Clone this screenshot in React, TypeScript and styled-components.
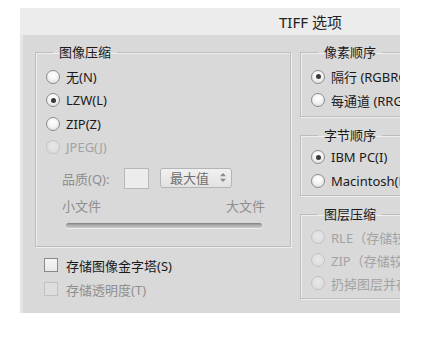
import React from "react";
import styled, { createGlobalStyle } from "styled-components";

const Global = createGlobalStyle`
  html, body { margin: 0; padding: 0; background: #ffffff; }
  body {
    font-family: "Noto Sans", "Noto Sans CJK SC", sans-serif;
    font-size: 13px;
    color: #1a1a1a;
  }
`;

const Dialog = styled.div`
  margin: 8px 0 0 20px;
  width: 380px;
  height: 305px;
  overflow: hidden;
  display: flex;
  flex-direction: column;
  background: #d9d9d9;
`;

const TitleBar = styled.div`
  height: 27px;
  flex: none;
  background: #ececec;
  display: flex;
  align-items: center;
  padding-left: 259px;
  font-size: 15px;
  color: #222;
  white-space: nowrap;
`;

const Body = styled.div`
  flex: 1;
  display: flex;
  gap: 9px;
  padding: 9px 0 0 12px;
  border-left: 3px solid #e6e6e6;
  background: #d9d9d9;
`;

const Column = styled.div<{ $w: number }>`
  width: ${(p) => p.$w}px;
  flex: none;
  display: flex;
  flex-direction: column;
`;

const RightColumn = styled(Column)`
  gap: 10px;
`;

const Group = styled.fieldset<{ $pt: number; $pb: number }>`
  margin: 0;
  padding: ${(p) => p.$pt}px 0 ${(p) => p.$pb}px 0;
  border: 1px solid #bdbdbd;
  box-shadow: 1px 1px 0 #eeeeee, inset 1px 1px 0 #eeeeee;
  min-width: 0;
  display: flex;
  flex-direction: column;
`;

const Legend = styled.legend`
  margin-left: 17px;
  padding: 0 6px;
  line-height: 16px;
  font-size: 13px;
  color: #1a1a1a;
  white-space: nowrap;
`;

const OptionRow = styled.div<{ $h: number; $disabled?: boolean }>`
  height: ${(p) => p.$h}px;
  display: flex;
  align-items: center;
  gap: 6px;
  padding-left: 10px;
  white-space: nowrap;
  color: ${(p) => (p.$disabled ? "#a3a3a3" : "#1a1a1a")};
`;

const RadioCircle = styled.span<{ $checked?: boolean; $disabled?: boolean }>`
  width: 12px;
  height: 12px;
  flex: none;
  border-radius: 50%;
  border: 1px solid ${(p) => (p.$disabled ? "#c3c3c3" : "#8c8c8c")};
  background: ${(p) =>
    p.$disabled
      ? "radial-gradient(circle at 50% 40%, #e8e8e8, #d8d8d8)"
      : "radial-gradient(circle at 50% 35%, #ffffff 0%, #f4f4f4 45%, #d6d6d6 100%)"};
  display: flex;
  align-items: center;
  justify-content: center;
  &::after {
    content: "";
    display: ${(p) => (p.$checked ? "block" : "none")};
    width: 5px;
    height: 5px;
    border-radius: 50%;
    background: #3a3a3a;
  }
`;

const QualityRow = styled.div`
  height: 22px;
  margin-top: 8px;
  display: flex;
  align-items: center;
  padding-left: 26px;
  color: #8f8f8f;
  white-space: nowrap;
`;

const QualityLabel = styled.span`
  width: 62px;
`;

const ValueBox = styled.span`
  width: 23px;
  height: 19px;
  border: 1px solid #b8b8b8;
  background: #ececec;
  margin-right: 11px;
`;

const SelectBox = styled.span`
  width: 72px;
  height: 20px;
  box-sizing: border-box;
  border: 1px solid #b4b4b4;
  border-radius: 3px;
  background: linear-gradient(#f1f1f1, #e2e2e2);
  display: flex;
  align-items: center;
  justify-content: space-between;
  padding: 0 5px 0 9px;
  color: #6f6f6f;
  margin-top: -1px;
`;

const SizeLabels = styled.div`
  height: 18px;
  margin-top: 7px;
  display: flex;
  justify-content: space-between;
  align-items: center;
  padding: 0 25px 0 26px;
  color: #8f8f8f;
`;

const Track = styled.div`
  height: 5px;
  margin: 9px 28px 0 30px;
  border-radius: 3px;
  background: linear-gradient(#7d7d7d, #a9a9a9 40%, #c9c9c9);
  box-shadow: 0 1px 0 #efefef;
`;

const Checks = styled.div`
  display: flex;
  flex-direction: column;
  padding-top: 6px;
`;

const CheckRow = styled.div<{ $disabled?: boolean }>`
  height: 24px;
  display: flex;
  align-items: center;
  gap: 8px;
  padding-left: 9px;
  white-space: nowrap;
  color: ${(p) => (p.$disabled ? "#8f8f8f" : "#1a1a1a")};
`;

const CheckBox = styled.span<{ $disabled?: boolean }>`
  width: 12px;
  height: 12px;
  flex: none;
  border: 1px solid ${(p) => (p.$disabled ? "#c2c2c2" : "#8a8a8a")};
  background: ${(p) => (p.$disabled ? "#dedede" : "linear-gradient(#f6f6f6, #e8e8e8)")};
`;

const Arrows = () => (
  <svg width="6" height="9" viewBox="0 0 6 9">
    <path d="M3 0 L6 3.3 H0 Z" fill="#8a8a8a" />
    <path d="M3 9 L6 5.7 H0 Z" fill="#8a8a8a" />
  </svg>
);

const Radio = ({
  label,
  checked,
  disabled,
  h,
}: {
  label: string;
  checked?: boolean;
  disabled?: boolean;
  h: number;
}) => (
  <OptionRow $h={h} $disabled={disabled}>
    <RadioCircle $checked={checked} $disabled={disabled} />
    <span>{label}</span>
  </OptionRow>
);

export default function App() {
  return (
    <>
      <Global />
      <Dialog>
        <TitleBar>TIFF 选项</TitleBar>
        <Body>
          <Column $w={256}>
            <Group $pt={5} $pb={18}>
              <Legend>图像压缩</Legend>
              <Radio h={23.5} label="无(N)" />
              <Radio h={23.5} label="LZW(L)" checked />
              <Radio h={23.5} label="ZIP(Z)" />
              <Radio h={23.5} label="JPEG(J)" disabled />
              <QualityRow>
                <QualityLabel>品质(Q):</QualityLabel>
                <ValueBox />
                <SelectBox>
                  <span>最大值</span>
                  <Arrows />
                </SelectBox>
              </QualityRow>
              <SizeLabels>
                <span>小文件</span>
                <span>大文件</span>
              </SizeLabels>
              <Track />
            </Group>
            <Checks>
              <CheckRow>
                <CheckBox />
                <span>存储图像金字塔(S)</span>
              </CheckRow>
              <CheckRow $disabled>
                <CheckBox $disabled />
                <span>存储透明度(T)</span>
              </CheckRow>
            </Checks>
          </Column>
          <RightColumn $w={140}>
            <Group $pt={5} $pb={4}>
              <Legend>像素顺序</Legend>
              <Radio h={23.5} label="隔行 (RGBRGB)" checked />
              <Radio h={23.5} label="每通道 (RRGGBB)" />
            </Group>
            <Group $pt={2} $pb={2}>
              <Legend>字节顺序</Legend>
              <Radio h={24} label="IBM PC(I)" checked />
              <Radio h={24} label="Macintosh(M)" />
            </Group>
            <Group $pt={3.5} $pb={3.5}>
              <Legend>图层压缩</Legend>
              <Radio h={23} label="RLE（存储较快，文件较大）" disabled />
              <Radio h={23} label="ZIP（存储较慢，文件较小）" disabled />
              <Radio h={23} label="扔掉图层并存储拷贝" disabled />
            </Group>
          </RightColumn>
        </Body>
      </Dialog>
    </>
  );
}
